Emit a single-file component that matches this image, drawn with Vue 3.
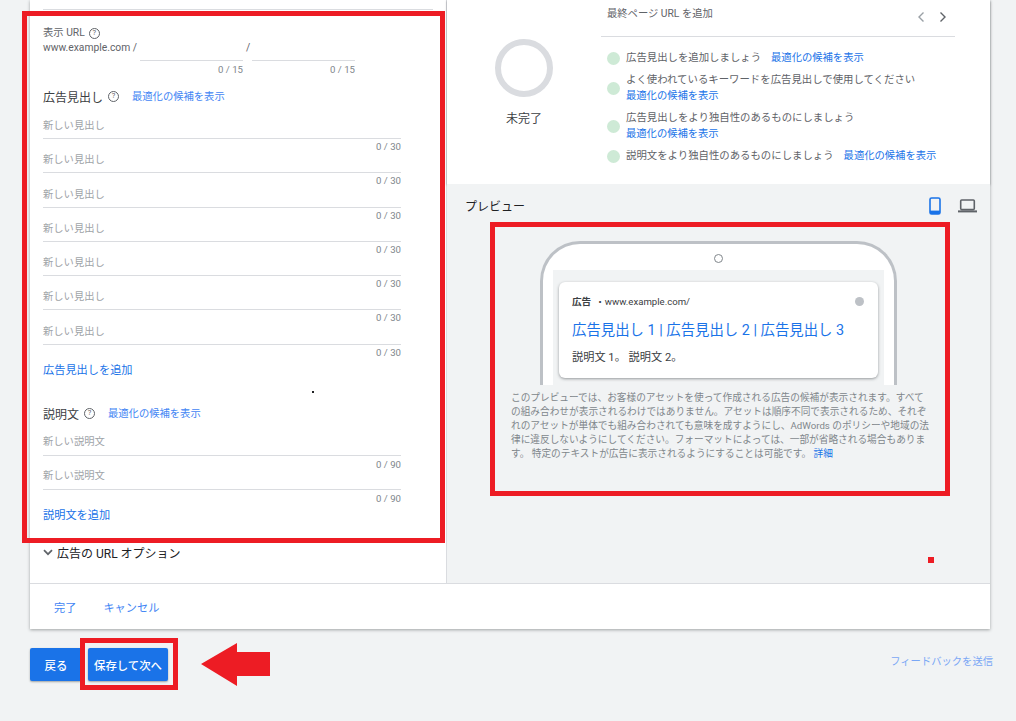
<script setup>
const headlines = Array.from({ length: 7 }, (_, i) => i)
const descriptions = [0, 1]
const LINK = '最適化の候補を表示'
</script>

<template>
  <div class="page">
    <section class="card">
      <div class="columns">
        <div class="left">
          <div class="top-rule"></div>
          <div class="label">表示 URL <span class="help">?</span></div>
          <div class="url-row">
            <span class="domain">www.example.com /</span>
            <div class="url-field"><div class="url-input"></div><div class="count">0 / 15</div></div>
            <span class="slash">/</span>
            <div class="url-field"><div class="url-input"></div><div class="count">0 / 15</div></div>
          </div>

          <div class="heading heading-first">
            <span>広告見出し</span><span class="help help-lg">?</span>
            <a class="suggest">{{ LINK }}</a>
          </div>
          <div class="fields fields-head">
            <div v-for="h in headlines" :key="h" class="field">
              <div class="input">新しい見出し</div>
              <div class="count">0 / 30</div>
            </div>
          </div>
          <a class="add add-head">広告見出しを追加</a>

          <div class="heading heading-desc">
            <span>説明文</span><span class="help help-lg">?</span>
            <a class="suggest">{{ LINK }}</a>
          </div>
          <div class="fields fields-desc">
            <div v-for="d in descriptions" :key="d" class="field field-desc">
              <div class="input">新しい説明文</div>
              <div class="count">0 / 90</div>
            </div>
          </div>
          <a class="add add-desc">説明文を追加</a>

          <div class="options">
            <svg width="10" height="7" viewBox="0 0 10 7"><path d="M1 1.2 5 5.2 9 1.2" fill="none" stroke="#5f6368" stroke-width="1.7" /></svg>
            <span>広告の URL オプション</span>
          </div>
        </div>

        <div class="right">
          <div class="strength">
            <div class="score">
              <div class="ring"></div>
              <div class="score-label">未完了</div>
            </div>
            <div class="tips">
              <div class="tips-head">
                <span>最終ページ URL を追加</span>
                <div class="pager">
                  <svg width="8" height="12" viewBox="0 0 8 12"><path d="M6.5 1.5 2 6l4.5 4.5" fill="none" stroke="#9aa0a6" stroke-width="1.4" /></svg>
                  <svg width="8" height="12" viewBox="0 0 8 12"><path d="M1.5 1.5 6 6l-4.5 4.5" fill="none" stroke="#5f6368" stroke-width="1.4" /></svg>
                </div>
              </div>
              <ul class="tip-list">
                <li><i class="dot"></i><div><span>広告見出しを追加しましょう</span><a class="tip-link inline">{{ LINK }}</a></div></li>
                <li><i class="dot"></i><div><div>よく使われているキーワードを広告見出しで使用してください</div><a class="tip-link">{{ LINK }}</a></div></li>
                <li><i class="dot"></i><div><div>広告見出しをより独自性のあるものにしましょう</div><a class="tip-link">{{ LINK }}</a></div></li>
                <li><i class="dot"></i><div><span>説明文をより独自性のあるものにしましょう</span><a class="tip-link inline">{{ LINK }}</a></div></li>
              </ul>
            </div>
          </div>

          <div class="preview">
            <div class="preview-head">
              <span>プレビュー</span>
              <div class="devices">
                <svg width="12" height="18" viewBox="0 0 12 18"><rect x="1" y="1" width="10" height="16" rx="1.6" fill="none" stroke="#1a73e8" stroke-width="1.6" /><rect x="1" y="13.6" width="10" height="3.4" fill="#1a73e8" /></svg>
                <svg width="19" height="14" viewBox="0 0 19 14"><rect x="2.7" y="1" width="13.6" height="9.6" rx="1" fill="none" stroke="#5f6368" stroke-width="1.6" /><rect x="0" y="11.4" width="19" height="2" fill="#5f6368" /></svg>
              </div>
            </div>
            <div class="phone">
              <div class="camera"></div>
              <div class="screen">
                <div class="ad">
                  <div class="ad-meta">
                    <b>広告</b><span class="ad-url">・www.example.com/</span><i class="ad-info"></i>
                  </div>
                  <div class="ad-title">広告見出し 1 | 広告見出し 2 | 広告見出し 3</div>
                  <div class="ad-text">説明文 1。 説明文 2。</div>
                </div>
              </div>
            </div>
            <p class="note">このプレビューでは、お客様のアセットを使って作成される広告の候補が表示されます。すべて<br>の組み合わせが表示されるわけではありません。アセットは順序不同で表示されるため、それぞ<br>れのアセットが単体でも組み合わされても意味を成すようにし、AdWords のポリシーや地域の法<br>律に違反しないようにしてください。フォーマットによっては、一部が省略される場合もありま<br>す。 特定のテキストが広告に表示されるようにすることは可能です。 <a class="detail">詳細</a></p>
          </div>
        </div>
      </div>
      <div class="card-foot">
        <a>完了</a>
        <a>キャンセル</a>
      </div>
    </section>

    <div class="actions">
      <button class="btn back">戻る</button>
      <button class="btn next">保存して次へ</button>
      <a class="feedback">フィードバックを送信</a>
    </div>

    <div class="mark mark-form"></div>
    <div class="mark mark-preview"></div>
    <div class="mark mark-button"></div>
    <div class="speck speck-red"></div>
    <div class="speck speck-black"></div>
    <svg class="arrow" width="69" height="43" viewBox="0 0 69 43"><path d="M0 21 36 0V9H69V33H36V43Z" fill="#ed1c24" /></svg>
  </div>
</template>

<style>
html, body { margin: 0; height: 721px; overflow: hidden; background: #f1f3f4; }
</style>

<style scoped>
.page {
  position: relative;
  box-sizing: border-box;
  width: 1016px;
  height: 721px;
  padding-left: 30px;
  background: #f1f3f4;
  font-family: Roboto, "Noto Sans CJK JP", sans-serif;
  font-size: 10.3px;
  color: #5f6368;
}
a { color: #4285f4; }
.card {
  width: 960px;
  height: 629px;
  background: #fff;
  box-shadow: 0 1px 3px rgba(60, 64, 67, 0.45);
  display: flex;
  flex-direction: column;
}
.columns { display: flex; height: 583px; border-bottom: 1px solid #dadce0; box-sizing: content-box; }
.left {
  width: 417px;
  box-sizing: border-box;
  padding-left: 13px;
  border-right: 1px solid #dadce0;
  flex: none;
}
.top-rule { margin: 9px 13px 0 0; border-top: 1px solid #dadce0; }
.label { margin-top: 16px; line-height: 14px; display: flex; align-items: center; gap: 4px; }
.help {
  display: inline-flex;
  align-items: center;
  justify-content: center;
  box-sizing: border-box;
  width: 11px;
  height: 11px;
  border: 1px solid #5f6368;
  border-radius: 50%;
  font-size: 7.5px;
  line-height: 1;
  color: #5f6368;
}
.help-lg { margin-left: 5px; }
.url-row { display: flex; align-items: flex-start; line-height: 16px; }
.domain { width: 97px; flex: none; white-space: nowrap; }
.slash { width: 6px; margin-left: 3px; flex: none; }
.url-field { width: 103px; flex: none; }
.url-input { height: 20px; border-bottom: 1px solid #dadce0; }
.count { text-align: right; line-height: 16px; height: 9.3px; color: #80868b; font-size: 9.6px; white-space: nowrap; }
.field-desc .count { line-height: 18px; }
.url-field .count { height: 16px; line-height: 18px; }
.heading { display: flex; align-items: center; height: 18px; font-size: 12px; color: #3c4043; }
.heading-first { margin-top: 10px; }
.heading-desc { margin-top: 25px; }
.suggest { font-size: 10.3px; margin-left: 13px; margin-top: -2px; }
.fields { width: 358px; margin-top: 9px; }
.input { height: 24px; line-height: 24px; border-bottom: 1px solid #dadce0; color: #a0a4a8; }
.field-desc .input { line-height: 22px; }
.add { display: block; font-size: 11.2px; line-height: 16px; color: #1a73e8; }
.add-head { margin-top: 9px; }
.add-desc { margin-top: 8px; }
.options { margin-top: 20px; display: flex; align-items: center; gap: 4px; height: 18px; font-size: 12px; color: #202124; }
.right { flex: 1; display: flex; flex-direction: column; min-width: 0; }
.strength {
  display: flex;
  height: 184px;
  flex: none;
  background: #fff;
  box-shadow: 0 1px 2px rgba(60, 64, 67, 0.5);
  position: relative;
}
.score { width: 154px; flex: none; display: flex; flex-direction: column; align-items: center; padding-top: 39px; box-sizing: border-box; }
.ring { width: 58px; height: 58px; box-sizing: border-box; border: 6px solid #dadce0; border-radius: 50%; }
.score-label { margin-top: 13px; font-size: 12px; line-height: 18px; color: #3c4043; }
.tips { width: 354px; }
.tips-head { height: 37px; box-sizing: border-box; padding: 7px 8px 0 6px; border-bottom: 1px solid #dadce0; display: flex; justify-content: space-between; line-height: 14px; }
.pager { display: flex; gap: 14px; padding-top: 4px; align-items: flex-start; }
.tip-list { list-style: none; margin: 13px 0 0; padding: 0 0 0 6px; display: flex; flex-direction: column; gap: 6px; line-height: 16px; font-size: 10.4px; }
.tip-list li { display: flex; align-items: center; gap: 6px; white-space: nowrap; }
.dot { width: 13px; height: 13px; flex: none; border-radius: 50%; background: #ceead6; }
.tip-link { color: #1a73e8; display: block; font-size: 10.3px; }
.tip-link.inline { display: inline; margin-left: 10px; }
.preview { flex: 1; background: #f1f3f4; border-right: 0; position: relative; }
.preview-head { display: flex; justify-content: space-between; align-items: center; padding: 13px 13px 0 18px; height: 17px; font-size: 12px; color: #202124; }
.devices { display: flex; align-items: center; gap: 17px; }
.phone {
  margin: 27px 0 0 93px;
  width: 357px;
  height: 144px;
  box-sizing: border-box;
  border: 3px solid #bdc1c6;
  border-bottom: 0;
  border-radius: 40px 40px 0 0;
  background: #fff;
  padding: 0 10px;
}
.camera { width: 9px; height: 9px; box-sizing: border-box; margin: 10px auto 7px; border: 1px solid #80868b; border-radius: 50%; }
.screen { height: 115px; box-sizing: border-box; background: #f1f3f4; padding: 12px 0 0 6px; }
.ad {
  width: 319px;
  height: 96px;
  box-sizing: border-box;
  background: #fff;
  border-radius: 6px;
  padding: 12px 22px 0 13px;
  box-shadow: 0 1px 3px rgba(60, 64, 67, 0.5);
}
.ad-meta { display: flex; align-items: center; height: 14px; font-size: 9.6px; color: #3c4043; }
.ad-meta b { font-weight: 700; color: #3c4043; }
.ad-url { margin-left: 4px; }
.ad-info { margin-left: auto; width: 9px; height: 9px; border-radius: 50%; background: #bdc1c6; margin-right: -8px; }
.ad-title { margin-top: 13px; font-size: 14.4px; line-height: 20px; color: #1a73e8; white-space: nowrap; }
.ad-text { margin-top: 9px; font-size: 11.2px; line-height: 16px; color: #3c4043; }
.note { margin: 6px 0 0 64px; width: 430px; font-size: 9.68px; line-height: 14px; color: #80868b; white-space: nowrap; }
.detail { color: #1a73e8; }
.card-foot { display: flex; align-items: center; flex: 1; padding-left: 24px; gap: 27px; font-size: 11.2px; }
.actions { display: flex; align-items: flex-start; gap: 6px; margin-top: 19px; width: 963px; }
.btn {
  height: 33px;
  border: 0;
  border-radius: 2px;
  background: #1a73e8;
  color: #fff;
  font: 500 11.4px Roboto, "Noto Sans CJK JP", sans-serif;
  padding: 0;
  box-shadow: 0 1px 2px rgba(60, 64, 67, 0.45);
}
.back { width: 52px; }
.next { width: 80px; }
.feedback { margin-left: auto; line-height: 28px; color: #7aa7f5; font-size: 10.3px; }
.mark { position: absolute; box-sizing: border-box; border: 5px solid #ed1c24; }
.mark-form { left: 22px; top: 11px; width: 423px; height: 532px; }
.mark-preview { left: 490px; top: 222px; width: 460px; height: 274px; }
.mark-button { left: 80px; top: 638px; width: 98px; height: 52px; }
.speck { position: absolute; }
.speck-red { left: 928px; top: 557px; width: 6px; height: 6px; background: #ed1c24; }
.speck-black { left: 312px; top: 391px; width: 2px; height: 2px; background: #202124; }
.arrow { position: absolute; left: 201px; top: 643px; }
</style>
